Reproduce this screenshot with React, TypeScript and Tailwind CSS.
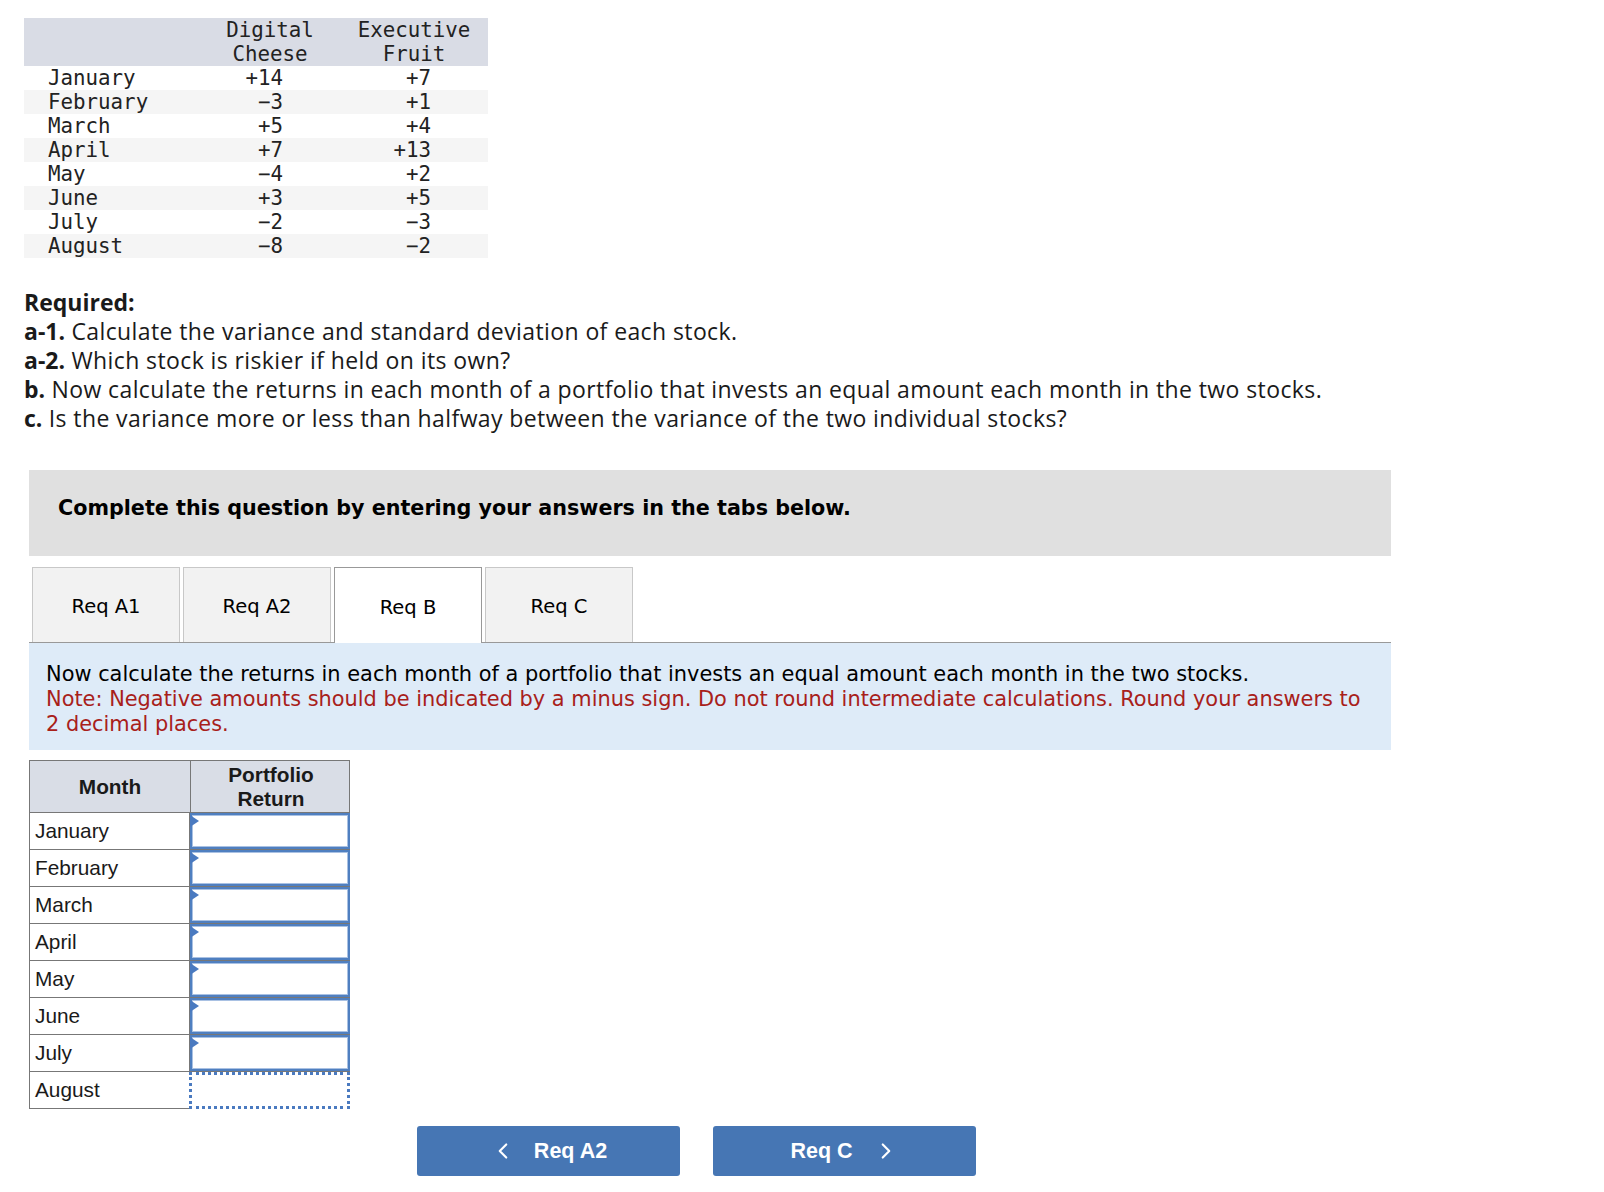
import { ChevronLeft, ChevronRight } from "lucide-react";

const stockRows: Array<[string, string, string]> = [
  ["January", "+14", "+7"],
  ["February", "−3", "+1"],
  ["March", "+5", "+4"],
  ["April", "+7", "+13"],
  ["May", "−4", "+2"],
  ["June", "+3", "+5"],
  ["July", "−2", "−3"],
  ["August", "−8", "−2"],
];

const months = ["January", "February", "March", "April", "May", "June", "July", "August"];

const tabs = ["Req A1", "Req A2", "Req B", "Req C"];

function StockTable() {
  return (
    <div className="mt-px w-[464px] font-['DejaVu_Sans_Mono',monospace] text-[20.8px] leading-[24px] text-[#222]">
      <div className="grid grid-cols-[176px_140px_148px] bg-[#d9dce5]">
        <div />
        <div className="text-center">
          Digital
          <br />
          Cheese
        </div>
        <div className="text-center">
          Executive
          <br />
          Fruit
        </div>
      </div>
      {stockRows.map(([month, dc, ef], i) => (
        <div
          key={month}
          className={`grid grid-cols-[176px_140px_148px] ${i % 2 === 1 ? "bg-[#f5f5f5]" : "bg-white"}`}
        >
          <div className="pl-6">{month}</div>
          <div className="pr-[57px] text-right">{dc}</div>
          <div className="pr-[57px] text-right">{ef}</div>
        </div>
      ))}
    </div>
  );
}

function Required() {
  return (
    <div className="mt-[30px] font-['Open_Sans',sans-serif] text-[23px] leading-[29px] tracking-[0.4px] text-[#1a1a1a]">
      <div className="font-bold tracking-normal">Required:</div>
      <div>
        <span className="font-bold tracking-normal">a-1.</span> Calculate the variance and standard deviation of each
        stock.
      </div>
      <div>
        <span className="font-bold tracking-normal">a-2.</span> Which stock is riskier if held on its own?
      </div>
      <div>
        <span className="font-bold tracking-normal">b.</span> Now calculate the returns in each month of a portfolio
        that invests an equal amount each month in the two stocks.
      </div>
      <div>
        <span className="font-bold tracking-normal">c.</span> Is the variance more or less than halfway between the
        variance of the two individual stocks?
      </div>
    </div>
  );
}

function InputCell({ last }: { last: boolean }) {
  if (last) {
    return <div className="h-full border-[3px] border-dotted border-[#4a7ac0] bg-white" />;
  }
  return (
    <div className="relative h-full border-2 border-[#4f7fc0] bg-white shadow-[inset_0_0_0_1px_#a9c1e3]">
      <div className="absolute left-[-2px] top-0 h-0 w-0 border-y-[6px] border-l-[9px] border-y-transparent border-l-[#4a7ac0]" />
    </div>
  );
}

function PortfolioTable() {
  return (
    <div className="mt-[10px] w-[321px] font-['Liberation_Sans',Arial,sans-serif] text-[20.8px] text-[#1a1a1a]">
      <div className="grid h-[53px] grid-cols-[160px_161px] border border-[#777] bg-[#d9dde6] font-bold">
        <div className="flex items-center justify-center">Month</div>
        <div className="flex flex-col items-center justify-center border-l border-[#777] leading-[24px]">
          <span>Portfolio</span>
          <span>Return</span>
        </div>
      </div>
      {months.map((m, i) => (
        <div key={m} className="grid h-[37px] grid-cols-[160px_161px]">
          <div className="flex items-center border-b border-l border-[#777] pl-[5px]">{m}</div>
          <div className={i === months.length - 1 ? "" : "border-b border-l border-[#777]"}>
            <InputCell last={i === months.length - 1} />
          </div>
        </div>
      ))}
    </div>
  );
}

export default function App() {
  return (
    <div className="min-h-[1192px] bg-white pl-6 pt-[17px]">
      <StockTable />
      <Required />

      <div className="ml-[5px] w-[1362px]">
        <div className="mt-[37px] h-[86px] bg-[#e0e0e0] pl-[29px] pt-[23px] font-['DejaVu_Sans',Verdana,sans-serif] text-[20.7px] font-bold text-black">
          Complete this question by entering your answers in the tabs below.
        </div>

        <div className="mt-[11px] flex gap-[3px] pl-[3px] font-['DejaVu_Sans',Verdana,sans-serif] text-[19.5px]">
          {tabs.map((t) => {
            const active = t === "Req B";
            return (
              <div
                key={t}
                className={
                  active
                    ? "relative z-10 mb-[-1px] flex h-[76px] w-[148px] items-center justify-center border border-b-0 border-[#999] bg-white pt-[4px] text-black"
                    : "flex h-[75px] w-[148px] items-center justify-center border border-b-0 border-[#c8c8c8] bg-[#f2f2f2] pt-[3px] text-black"
                }
              >
                {t}
              </div>
            );
          })}
        </div>

        <div className="border-t border-[#999] bg-[#deebf8] pb-[13px] pl-[17px] pr-6 pt-[19px] font-['DejaVu_Sans',Verdana,sans-serif] text-[20.9px] leading-[25px]">
          <div className="text-black">
            Now calculate the returns in each month of a portfolio that invests an equal amount each month in the two
            stocks.
          </div>
          <div className="text-[#a8201a]">
            Note: Negative amounts should be indicated by a minus sign. Do not round intermediate calculations. Round
            your answers to 2 decimal places.
          </div>
        </div>

        <PortfolioTable />

        <div className="mt-[17px] flex gap-[33px] pl-[388px] font-['Liberation_Sans',Arial,sans-serif] text-[21.5px] font-bold text-white">
          <button className="flex h-[50px] w-[263px] items-center justify-center gap-[18px] rounded-[3px] bg-[#4676b4]">
            <ChevronLeft size={26} strokeWidth={2} />
            <span>Req A2</span>
          </button>
          <button className="flex h-[50px] w-[263px] items-center justify-center gap-[20px] rounded-[3px] bg-[#4676b4]">
            <span>Req C</span>
            <ChevronRight size={26} strokeWidth={2} />
          </button>
        </div>
      </div>
    </div>
  );
}
